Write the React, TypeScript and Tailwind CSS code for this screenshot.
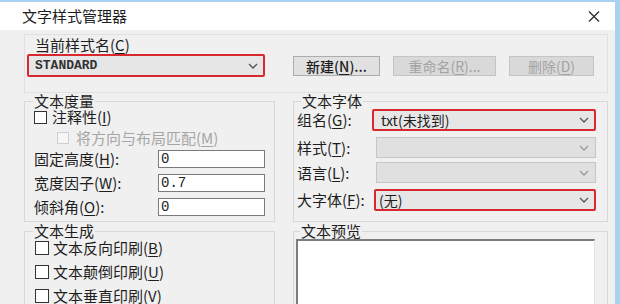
import React from "react";

const CJK = "font-['Noto_Sans_CJK_SC','Noto_Sans',sans-serif]";

function Chevron({ light }: { light?: boolean }) {
  return (
    <svg width="10" height="6" viewBox="0 0 10 6" className="shrink-0">
      <polyline
        points="1,1 5,5 9,1"
        fill="none"
        stroke={light ? "#9a9a9a" : "#555"}
        strokeWidth="1.3"
      />
    </svg>
  );
}

function Mn({ k }: { k: string }) {
  return (
    <>
      (<span className="underline underline-offset-2">{k}</span>)
    </>
  );
}

function Check({ disabled, size = "w-[13px] h-[13px]" }: { disabled?: boolean; size?: string }) {
  return (
    <span
      className={`${size} shrink-0 border ${
        disabled ? "border-[#cfcfcf] bg-[#f6f6f6]" : "border-[#333] bg-white"
      }`}
    />
  );
}

function Field({ label, k, value, first }: { label: string; k: string; value: string; first?: boolean }) {
  return (
    <div className={`flex items-center h-[18px] ${first ? "mt-[4px]" : "mt-[6px]"}`}>
      <span className="w-[124px]">
        {label}
        <Mn k={k} />:
      </span>
      <div className="w-[107px] h-[18px] border border-[#7a7a7a] bg-white pl-[2px] flex items-center font-['Liberation_Mono',monospace] text-[14px] text-[#222]">
        {value}
      </div>
    </div>
  );
}

export default function App() {
  return (
    <div
      className={`w-[620px] h-[304px] overflow-hidden bg-[#f0f0f0] border-t-[2px] border-r-[5px] border-[#a8d2ef] text-[15px] leading-[16px] text-[#1e1e1e] ${CJK}`}
    >
      {/* title bar */}
      <div className="h-[28px] bg-white flex items-center justify-between pl-[22px] pr-[15px]">
        <span className="text-[15px]">文字样式管理器</span>
        <svg width="12" height="11" viewBox="0 0 12 11">
          <path d="M1 0.5 L11 10.5 M11 0.5 L1 10.5" stroke="#333" strokeWidth="1.4" fill="none" />
        </svg>
      </div>

      <div className="pl-[24px] pr-[7px]">
        {/* current style */}
        <div className="mt-[4px] h-[59px] border border-[#e0e0e0] pl-[2px] pt-[2px]">
          <div className="ml-[8px] h-[16px]">
            当前样式名<Mn k="C" />
          </div>
          <div className="flex items-start mt-[1px]">
            <div className="w-[238px] h-[23px] border-2 border-[#d8282e] rounded-[2px] bg-[#e6e6e6] flex items-center justify-between pl-[6px] pr-[5px]">
              <span className="font-['Liberation_Mono',monospace] font-bold text-[13px] text-[#333]">STANDARD</span>
              <Chevron />
            </div>
            <div className="flex mt-[2px] ml-[28px] gap-[13px]">
              <div className="w-[87px] h-[20px] border border-[#adadad] bg-[#e1e1e1] flex items-center justify-center text-[14px] font-medium">
                新建<Mn k="N" />...
              </div>
              <div className="w-[103px] h-[20px] border border-[#c4c4c4] bg-[#d9d9d9] flex items-center justify-center text-[14px] text-[#a3a3a3]">
                重命名<Mn k="R" />...
              </div>
              <div className="w-[85px] h-[20px] border border-[#c4c4c4] bg-[#d9d9d9] flex items-center justify-center text-[14px] text-[#a3a3a3]">
                删除<Mn k="D" />
              </div>
            </div>
          </div>
        </div>

        {/* two columns */}
        <div className="flex gap-[18px]">
          <div className="w-[251px] shrink-0">
            <fieldset className="h-[129px] border border-[#d8d8d8] pl-[9px]">
              <legend className="ml-[-1px] px-[1px]">文本度量</legend>
              <div className="flex items-center gap-[5px] h-[16px]">
                <Check />
                <span>
                  注释性<Mn k="I" />
                </span>
              </div>
              <div className="flex items-center gap-[7px] h-[16px] mt-[5px] ml-[23px] text-[#a6a6a6]">
                <Check disabled size="w-[12px] h-[12px]" />
                <span>
                  将方向与布局匹配<Mn k="M" />
                </span>
              </div>
              <Field first label="固定高度" k="H" value="0" />
              <Field label="宽度因子" k="W" value="0.7" />
              <Field label="倾斜角" k="O" value="0" />
            </fieldset>

            <fieldset className="mt-[1px] h-[120px] border border-[#d8d8d8] pl-[10px]">
              <legend className="ml-[-2px] px-[1px]">文本生成</legend>
              {[
                ["文本反向印刷", "B"],
                ["文本颠倒印刷", "U"],
                ["文本垂直印刷", "V"],
              ].map(([t, k], i) => (
                <div key={k} className={`flex items-center gap-[4px] h-[16px] ${i === 0 ? "mt-[1px]" : "mt-[8px]"}`}>
                  <Check size="w-[14px] h-[14px]" />
                  <span>
                    {t}
                    <Mn k={k} />
                  </span>
                </div>
              ))}
            </fieldset>
          </div>

          <div className="flex-1">
            <fieldset className="h-[129px] border border-[#d8d8d8] pl-[3px] pr-[11px]">
              <legend className="ml-[4px] px-[1px]">文本字体</legend>
              <div className="flex items-center h-[22px]">
                <span className="w-[75px] shrink-0">
                  组名<Mn k="G" />:
                </span>
                <div className="flex-1 h-[22px] border-2 border-[#d8282e] rounded-[2px] bg-[#e6e6e6] flex items-center justify-between pl-[7px] pr-[5px]">
                  <span className="text-[14px]">txt(未找到)</span>
                  <Chevron />
                </div>
              </div>
              {[
                ["样式", "T"],
                ["语言", "L"],
              ].map(([t, k], i) => (
                <div key={k} className={`flex items-center h-[21px] ${i === 0 ? "mt-[6px]" : "mt-[4px]"}`}>
                  <span className="w-[79px] shrink-0">
                    {t}
                    <Mn k={k} />:
                  </span>
                  <div className="flex-1 h-[21px] border border-[#c6c6c6] bg-[#e0e0e0] flex items-center justify-end pr-[6px]">
                    <Chevron light />
                  </div>
                </div>
              ))}
              <div className="flex items-center h-[22px] mt-[6px]">
                <span className="w-[77px] shrink-0">
                  大字体<Mn k="F" />:
                </span>
                <div className="flex-1 h-[22px] border-2 border-[#d8282e] rounded-[2px] bg-[#e6e6e6] flex items-center justify-between pl-[3px] pr-[5px]">
                  <span className="text-[14px]">(无)</span>
                  <Chevron />
                </div>
              </div>
            </fieldset>

            <fieldset className="mt-[1px] h-[120px] border border-[#d8d8d8] pl-[2px] pr-[12px]">
              <legend className="ml-[4px] px-[1px]">文本预览</legend>
              <div className="h-[80px] bg-white border-t-2 border-l-2 border-[#7d7d7d] border-r border-r-[#e3e3e3]" />
            </fieldset>
          </div>
        </div>
      </div>
    </div>
  );
}
